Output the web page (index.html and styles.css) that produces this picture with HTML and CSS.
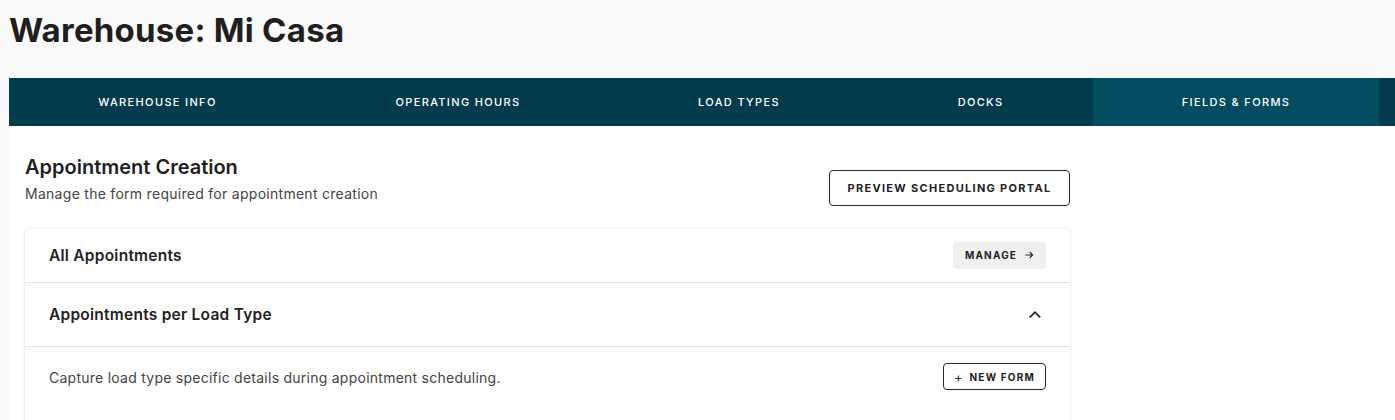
FILE: index.html
```html
<!DOCTYPE html>
<html lang="en">
<head>
<meta charset="utf-8">
<title>Warehouse: Mi Casa</title>
<link rel="stylesheet" href="styles.css">
</head>
<body>
<div class="page">
  <h1 class="title">Warehouse: Mi Casa</h1>
  <nav class="tabs">
    <div class="tab tab-info">WAREHOUSE INFO</div>
    <div class="tab tab-hours">OPERATING HOURS</div>
    <div class="tab tab-load">LOAD TYPES</div>
    <div class="tab tab-docks">DOCKS</div>
    <div class="tab tab-fields active">FIELDS &amp; FORMS</div>
  </nav>
  <main class="content">
    <div class="inner">
      <div class="section-head">
        <div class="section-text">
          <h2 class="section-title">Appointment Creation</h2>
          <p class="section-sub">Manage the form required for appointment creation</p>
        </div>
        <button class="btn-outline btn-preview">PREVIEW SCHEDULING PORTAL</button>
      </div>
      <div class="card">
        <div class="row row-all">
          <span class="row-title">All Appointments</span>
          <button class="btn-manage">MANAGE
            <svg class="arrow" width="9" height="8" viewBox="0 0 9 8"><path d="M0.5 4H7.5M4.8 1.2L7.6 4L4.8 6.8" fill="none" stroke="#222" stroke-width="1.2"/></svg>
          </button>
        </div>
        <div class="row row-load">
          <span class="row-title">Appointments per Load Type</span>
          <span class="chevron">
            <svg width="14" height="9" viewBox="0 0 14 9"><path d="M1.8 7.4L7 2.2L12.2 7.4" fill="none" stroke="#222" stroke-width="1.8"/></svg>
          </span>
        </div>
        <div class="row row-body">
          <span class="row-text">Capture load type specific details during appointment scheduling.</span>
          <button class="btn-outline btn-new"><span class="plus">+</span>NEW FORM</button>
        </div>
      </div>
    </div>
  </main>
</div>
</body>
</html>
```

FILE: styles.css
```css
html, body {
  margin: 0;
  padding: 0;
  background: #fafafa;
  overflow: hidden;
}

.page {
  padding-left: 9px;
  font-family: "Inter", "Liberation Sans", sans-serif;
  color: #222;
}

.title {
  margin: 0;
  height: 78px;
  box-sizing: border-box;
  padding-top: 9px;
  font-family: "Inter", "Liberation Sans", sans-serif;
  font-weight: 700;
  font-size: 33px;
  line-height: 42px;
  letter-spacing: 0.25px;
  color: #1f1f1f;
}

.tabs {
  display: flex;
  height: 48px;
  background: #023a4e;
}

.tab {
  flex: 0 0 auto;
  display: flex;
  align-items: center;
  justify-content: center;
  color: #fff;
  font-size: 11px;
  font-weight: 500;
  letter-spacing: 1.35px;
}

.tab-info { width: 297px; }
.tab-hours { width: 304px; }
.tab-load { width: 258px; }
.tab-docks { width: 225px; }
.tab-fields { width: 286px; }

.tab.active {
  background: #034c60;
}

.content {
  background: #fff;
  min-height: 300px;
  padding: 0 16px;
}

.inner {
  width: 1045px;
}

.section-head {
  display: flex;
  justify-content: space-between;
  align-items: flex-end;
  padding-top: 28px;
}

.section-text {
  margin-bottom: 2px;
}

.section-title {
  margin: 0;
  font-size: 20px;
  font-weight: 600;
  line-height: 26px;
  color: #1f1f1f;
}

.section-sub {
  margin: 4px 0 0;
  font-size: 14px;
  line-height: 20px;
  letter-spacing: 0.28px;
  color: #444;
}

.btn-outline {
  background: #fff;
  border: 1px solid #2a2a2a;
  border-radius: 4px;
  font-family: inherit;
  font-weight: 700;
  color: #222;
  display: flex;
  align-items: center;
  justify-content: center;
  cursor: pointer;
}

.btn-preview {
  width: 241px;
  height: 36px;
  font-size: 11px;
  letter-spacing: 1.3px;
}

.card {
  margin-top: 23px;
  background: #fff;
  border-radius: 4px;
  box-shadow: 0 0 3px rgba(0, 0, 0, 0.12), 0 1px 2px rgba(0, 0, 0, 0.06);
  min-height: 220px;
}

.row {
  display: flex;
  align-items: center;
  justify-content: space-between;
  padding: 0 24px;
}

.row-all {
  height: 53px;
  border-bottom: 1px solid #e3e3e3;
}

.row-load {
  height: 63px;
  border-bottom: 1px solid #e3e3e3;
}

.row-body {
  height: 61px;
}

.row-title {
  font-size: 15.5px;
  font-weight: 600;
  letter-spacing: 0.25px;
  color: #222;
}

.row-text {
  font-size: 14px;
  letter-spacing: 0.25px;
  color: #444;
}

.btn-manage {
  width: 93px;
  height: 27px;
  border: none;
  border-radius: 4px;
  background: #f0f0f0;
  font-family: inherit;
  font-weight: 700;
  font-size: 10px;
  letter-spacing: 1.2px;
  color: #222;
  display: flex;
  align-items: center;
  justify-content: center;
  gap: 8px;
  padding: 0;
  margin-top: -1px;
}

.chevron {
  width: 24px;
  display: flex;
  justify-content: center;
  margin-right: -1px;
}

.btn-new {
  width: 103px;
  height: 27px;
  font-size: 10px;
  letter-spacing: 1.2px;
  padding: 0;
  margin-top: -2px;
}

.plus {
  font-weight: 400;
  font-size: 13px;
  margin-right: 7px;
  letter-spacing: 0;
}
```
